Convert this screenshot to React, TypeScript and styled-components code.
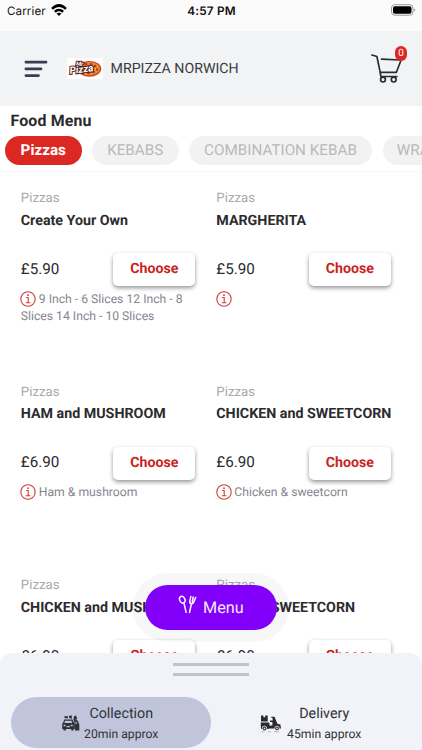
import React from 'react';
import styled, { createGlobalStyle } from 'styled-components';

const GlobalStyle = createGlobalStyle`
  * { box-sizing: border-box; }
  body { margin: 0; background: #fff; font-family: Roboto, sans-serif; color: #2b2b2d; text-rendering: geometricPrecision; }
  button { font-family: inherit; border: 0; padding: 0; margin: 0; text-rendering: inherit; }
`;

const Screen = styled.div`
  position: relative;
  display: flex;
  flex-direction: column;
  width: 422px;
  height: 750px;
  overflow: hidden;
  background: #fff;
`;

const StatusBar = styled.div`
  display: grid;
  grid-template-columns: 1fr auto 1fr;
  align-items: start;
  height: 31px;
  padding: 3px 6px 0 7px;
  background: #fbfbfb;
  font-family: Inter, sans-serif;
  font-size: 11.5px;
  line-height: 16px;
  color: #111;
`;

const Carrier = styled.div`
  display: flex;
  gap: 5px;
  font-size: 11.6px;
  letter-spacing: 0.1px;
`;

const Clock = styled.div`
  font-weight: 600;
  font-size: 11.8px;
  letter-spacing: 0.2px;
`;

const Battery = styled.div`
  justify-self: end;
  height: 12px;
  padding-top: 1px;
`;

const Header = styled.header`
  display: flex;
  align-items: center;
  height: 75px;
  padding: 0 15px 0 24px;
  background: #f2f3f5;
`;

const Logo = styled.div`
  width: 36px;
  height: 21px;
  margin: 0 8px 0 18.5px;
  background: #fff;
`;

const ShopName = styled.div`
  flex: 1;
  font-size: 14.2px;
  line-height: 18px;
  color: #3a3a3d;
`;

const Cart = styled.div`
  position: relative;
  width: 36px;
  height: 38px;
`;

const CartBadge = styled.span`
  position: absolute;
  top: -4px;
  right: 0;
  width: 12px;
  height: 15px;
  border-radius: 6px;
  background: #db2823;
  color: #fff;
  font-size: 10px;
  line-height: 15px;
  text-align: center;
`;

const MenuTop = styled.div`
  height: 66px;
  flex: none;
  border-bottom: 1px solid #f8f8f8;
  padding-top: 5px;
`;

const Heading = styled.h1`
  margin: 0 0 5px 10.5px;
  font-size: 15.9px;
  line-height: 20px;
  font-weight: 700;
  letter-spacing: 0.16px;
`;

const Tabs = styled.nav`
  display: flex;
  gap: 10.5px;
  padding-left: 5px;
  overflow: hidden;
`;

const Tab = styled.button<{ $width: number; $active?: boolean }>`
  flex: 0 0 ${p => p.$width}px;
  height: 29px;
  border-radius: 15px;
  background: ${p => (p.$active ? '#db2823' : '#f2f2f2')};
  color: ${p => (p.$active ? '#fff' : '#b9b9b9')};
  font-size: 15.2px;
  line-height: 29px;
  font-weight: ${p => (p.$active ? 700 : 400)};
  letter-spacing: 0.03px;
  white-space: nowrap;
`;

const Products = styled.main`
  flex: 1;
  min-height: 0;
  overflow: hidden;
  display: grid;
  grid-template-columns: 174.5px 174.5px;
  grid-auto-rows: 193.5px;
  column-gap: 21px;
  padding: 18px 0 0 20.8px;
`;

const Category = styled.div`
  font-size: 13.2px;
  line-height: 18px;
  letter-spacing: 0.05px;
  color: #a9a9a9;
`;

const ProductName = styled.div`
  margin-top: 3.5px;
  font-size: 14.25px;
  line-height: 18px;
  font-weight: 700;
  white-space: nowrap;
`;

const Purchase = styled.div`
  display: flex;
  align-items: center;
  justify-content: space-between;
  margin-top: 23.6px;
`;

const Price = styled.div`
  font-size: 15.2px;
  line-height: 18px;
  padding-bottom: 2px;
`;

const Choose = styled.button`
  width: 82px;
  height: 33px;
  padding: 0 0 1px 0;
  border-radius: 5px;
  background: #fff;
  color: #c92320;
  font-size: 14.2px;
  font-weight: 700;
  box-shadow: 0 2px 4px rgba(0, 0, 0, 0.42);
`;

const Details = styled.div`
  margin-top: 4.8px;
  font-size: 12.2px;
  line-height: 17.2px;
  color: #85858f;
  svg { vertical-align: -4px; margin: 0 2.5px 0 -0.5px; }
`;

const FloatingMenu = styled.div`
  position: absolute;
  left: 133px;
  top: 572.5px;
  padding: 12px;
  border-radius: 36px;
  background: rgba(0, 0, 0, 0.03);
`;

const MenuButton = styled.button`
  display: flex;
  align-items: center;
  gap: 6px;
  width: 132px;
  height: 45px;
  padding-left: 33px;
  border-radius: 23px;
  background: #8200fa;
  color: #f6eaff;
  font-size: 16.2px;
  svg { margin-bottom: 4px; }
`;

const Sheet = styled.footer`
  position: relative;
  flex: none;
  height: 97px;
  padding: 10px 10.5px 0;
  border-radius: 12px 12px 0 0;
  background: #f2f3f9;
`;

const Handle = styled.div`
  width: 76px;
  height: 13px;
  margin: 0 auto 21px;
  border: solid #c2c3c9;
  border-width: 3px 0;
`;

const Modes = styled.div`
  display: grid;
  grid-template-columns: 200.5px 200.5px;
`;

const Mode = styled.button<{ $selected?: boolean }>`
  display: grid;
  grid-template-columns: ${p => (p.$selected ? 22 : 27)}px 74px;
  justify-content: center;
  align-items: center;
  height: 51px;
  padding: 2px 1px 0 0;
  border-radius: 26px;
  background: ${p => (p.$selected ? '#c0c5dc' : 'transparent')};
  color: #303136;
`;

const ModeText = styled.div`
  margin: 0 -4px;
  text-align: center;
`;

const ModeName = styled.div`
  font-size: 14.3px;
  line-height: 20px;
`;

const ModeTime = styled.div`
  font-size: 12.2px;
  line-height: 20px;
  white-space: nowrap;
`;

const Wifi = () => (
  <svg width="16" height="15" viewBox="0 0 16 15">
    <path d="M.2 5C5-.2 11-.2 15.8 5L14 6.8C10 3.1 6 3.1 2 6.8Z" fill="#000" />
    <path d="M3 7.9c3-3 7-3 10 0l-1.8 1.8c-2-1.8-4.4-1.8-6.4 0Z" fill="#000" />
    <path d="M5.5 10.6c1.5-1.3 3.5-1.3 5 0L8 13Z" fill="#000" />
  </svg>
);

const BatteryIcon = () => (
  <svg width="25" height="12" viewBox="0 0 25 12">
    <rect x=".5" y=".7" width="21.5" height="10.5" rx="3.2" fill="none" stroke="#999" />
    <rect x="2" y="2.2" width="18.5" height="7.5" rx="1.8" fill="#000" />
    <path d="M23.3 4.4v3c1.3-.4 1.3-2.6 0-3Z" fill="#888" />
  </svg>
);

const Hamburger = () => (
  <svg width="24" height="18" viewBox="0 0 24 18">
    <path d="M1.9 2.2h20.1M1.9 8.9h15.1M1.9 15.6h12.6" stroke="#3c3b52" strokeWidth="2.7" strokeLinecap="round" />
  </svg>
);

const PizzaLogo = () => (
  <svg width="36" height="21" viewBox="0 0 36 21">
    <ellipse cx="22.5" cy="10.8" rx="11.8" ry="7.9" fill="#ce4722" />
    <ellipse cx="22.5" cy="10.6" rx="10.5" ry="6.6" fill="#e88a32" />
    <g fill="#b93419">
      <circle cx="19" cy="6" r="1.3" /><circle cx="24" cy="6.2" r="1.3" />
      <circle cx="28" cy="8" r="1.2" /><circle cx="25.5" cy="10.4" r="1.4" />
      <circle cx="30" cy="11.5" r="1.2" /><circle cx="26.5" cy="14" r="1.3" />
      <circle cx="21.5" cy="15" r="1.3" /><circle cx="16" cy="15.5" r="1" />
    </g>
    <g fill="#f7cf66">
      <circle cx="22" cy="8" r=".8" /><circle cx="28.5" cy="11" r=".7" />
      <circle cx="24" cy="13" r=".8" /><circle cx="18.5" cy="16.2" r=".6" />
    </g>
    <g fontFamily="Roboto, sans-serif" fontWeight="700" fontStyle="italic" fill="#fff" stroke="#552018" strokeWidth="2" paintOrder="stroke">
      <text x="9" y="7.5" fontSize="6">Mr</text>
      <text x="2.9" y="16" fontSize="10" transform="rotate(-7 3 15)">Pizza</text>
    </g>
  </svg>
);

const CartIcon = () => (
  <svg width="36" height="38" viewBox="0 0 36 38" fill="none" stroke="#2c2c34" strokeWidth="1.7" strokeLinecap="round" strokeLinejoin="round">
    <path d="M.9 5l5 1.5 3.3 15.8h16.2L30 10.3M10.5 9.2l19 .8M9.1 22.3l.8 4.2h16" />
    <circle cx="12" cy="29.6" r="2.4" />
    <circle cx="22.7" cy="29.6" r="2.4" />
  </svg>
);

const InfoIcon = () => (
  <svg width="16" height="16" viewBox="0 0 16 16" fill="none" stroke="#d23b38">
    <circle cx="8" cy="8" r="7.2" strokeWidth="1.1" />
    <path d="M6.2 6.5h2v5M5.8 11.7h4.6" strokeWidth="1.1" />
    <circle cx="8" cy="4.2" r=".9" fill="#d23b38" stroke="none" />
  </svg>
);

const Cutlery = () => (
  <svg width="19" height="20" viewBox="0 0 19 20" fill="none" stroke="#fff" strokeWidth="1.5" strokeLinecap="round" strokeLinejoin="round">
    <ellipse cx="4.3" cy="4.7" rx="2.6" ry="3.5" transform="rotate(-25 4.3 4.7)" />
    <path d="M5.9 7.9l2.2 9.4M12.8 1.6l-1 4.2c-.3 1.7.3 2.6 1.6 3.1M15.2 2l-1 5M17.7 2.5l-1.6 4c-.6 1.6-1.4 2.4-2.7 2.4l-1.9 8.6" />
  </svg>
);

const CollectionIcon = () => (
  <svg width="18" height="17" viewBox="0 0 18 17" fill="#303138">
    <path d="M1 8l1.2-3.5h8.2L12 8h.8v6h-1.2v1.5H9.3V14H3.8v1.5H1.5V14H.2V8.5ZM3 5.8L2.4 8h7.8l-.7-2.2Z" />
    <path d="M2 1.2h4v2H3zM7 1l2.8-.8v3.7L7 2.7zM12 1.2l2-.8 1.2 3-2 1.7h-1.8z" />
    <path d="M11.6 5.4l2.8-1.2 1.7 2.2 1.2 3.2v6H13V9z" />
    <path d="M1.6 9.8h2v1.4h-2zM8.7 9.8h2v1.4h-2zM4.6 11h3.2v1.2H4.6zM13.6 6l1.7 2.2-1.6 1.4z" fill="#c0c5dc" />
  </svg>
);

const DeliveryIcon = () => (
  <svg width="21" height="18" viewBox="0 0 21 18" fill="#292a30">
    <path d="M1 .4h2.4v1.8h1.8V.4h2.5v6.2H1zM.7 7.4h8.7v3.2h3V7H10V5.6h2.6V3h-1.2V1.7h3.1l2.9 7 3 .9.6 3.8H9L8.4 14H1z" />
    <g stroke="#f2f3f9" strokeWidth=".8">
      <circle cx="4.5" cy="13.4" r="2.3" /><circle cx="17" cy="13.4" r="2.3" />
    </g>
    <g fill="#f2f3f9"><circle cx="4.5" cy="13.4" r=".8" /><circle cx="17" cy="13.4" r=".8" /></g>
    <path d="M1.5 16.8h3M8 16.8h3M14 16.8h5" stroke="#aaa" strokeWidth=".8" />
  </svg>
);

const tabs = [
  { label: 'Pizzas', width: 76.5, active: true },
  { label: 'KEBABS', width: 86.5 },
  { label: 'COMBINATION KEBAB', width: 183 },
  { label: 'WRAPS', width: 80 },
];

const products = [
  { name: 'Create Your Own', price: '£5.90', details: '9 Inch - 6 Slices 12 Inch - 8 Slices 14 Inch - 10 Slices' },
  { name: 'MARGHERITA', price: '£5.90', details: '' },
  { name: 'HAM and MUSHROOM', price: '£6.90', details: 'Ham & mushroom' },
  { name: 'CHICKEN and SWEETCORN', price: '£6.90', details: 'Chicken & sweetcorn' },
  { name: 'CHICKEN and MUSHROOM', price: '£6.90', details: '' },
  { name: 'TUNA & SWEETCORN', price: '£6.90', details: '' },
];

export default function App() {
  return (
    <Screen>
      <GlobalStyle />
      <StatusBar>
        <Carrier>Carrier <Wifi /></Carrier>
        <Clock>4:57 PM</Clock>
        <Battery><BatteryIcon /></Battery>
      </StatusBar>
      <Header>
        <Hamburger />
        <Logo><PizzaLogo /></Logo>
        <ShopName>MRPIZZA NORWICH</ShopName>
        <Cart><CartIcon /><CartBadge>0</CartBadge></Cart>
      </Header>
      <MenuTop>
        <Heading>Food Menu</Heading>
        <Tabs>
          {tabs.map(t => (
            <Tab key={t.label} $width={t.width} $active={t.active}>{t.label}</Tab>
          ))}
        </Tabs>
      </MenuTop>
      <Products>
        {products.map(p => (
          <article key={p.name}>
            <Category>Pizzas</Category>
            <ProductName>{p.name}</ProductName>
            <Purchase>
              <Price>{p.price}</Price>
              <Choose>Choose</Choose>
            </Purchase>
            <Details><InfoIcon />{p.details}</Details>
          </article>
        ))}
      </Products>
      <Sheet>
        <Handle />
        <Modes>
          <Mode $selected>
            <CollectionIcon />
            <ModeText><ModeName>Collection</ModeName><ModeTime>20min approx</ModeTime></ModeText>
          </Mode>
          <Mode>
            <DeliveryIcon />
            <ModeText><ModeName>Delivery</ModeName><ModeTime>45min approx</ModeTime></ModeText>
          </Mode>
        </Modes>
      </Sheet>
      <FloatingMenu>
        <MenuButton><Cutlery />Menu</MenuButton>
      </FloatingMenu>
    </Screen>
  );
}
